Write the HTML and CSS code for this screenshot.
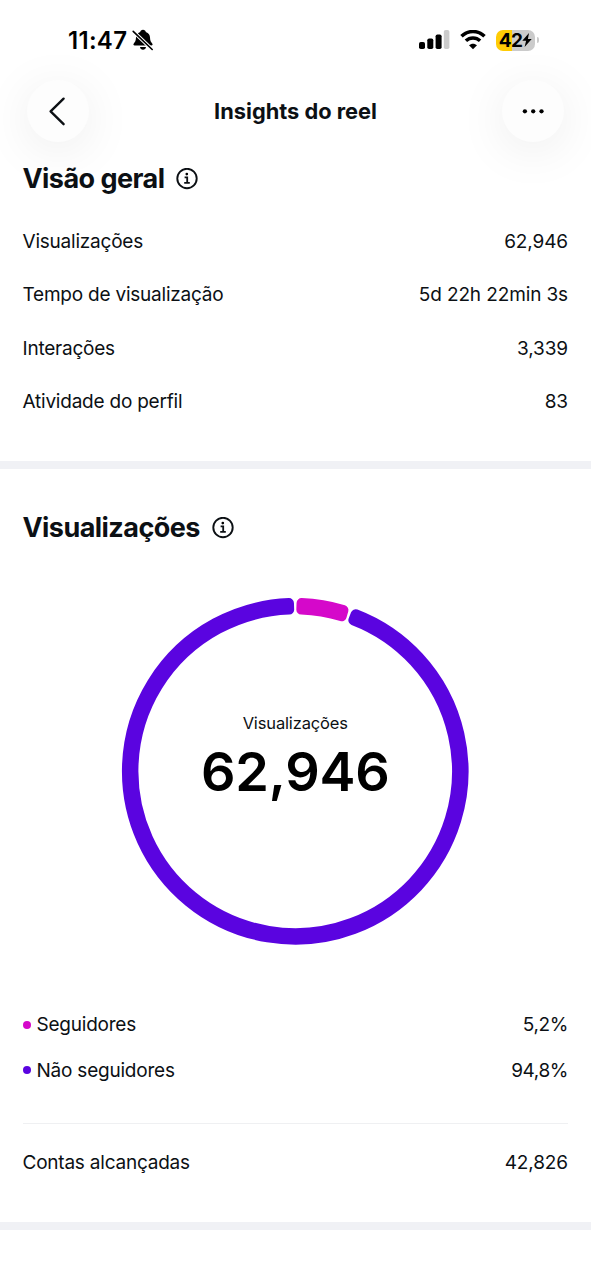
FILE: index.html
```html
<!DOCTYPE html>
<html lang="pt-BR">
<head>
<meta charset="utf-8">
<title>Insights do reel</title>
<link rel="stylesheet" href="styles.css">
</head>
<body>
<div class="status">
  <div class="status-left">
    <span class="clock">11:47</span>
    <svg class="bell" width="22" height="22" viewBox="0 0 22 22">
      <path d="M11 .8c-1.600 0-2.600 1-2.800 2.100C5.200 3.800 4.100 6 4 8.600c-.1 3.300-.9 4.500-2.200 5.900-.8.900-.4 2 .9 2h16.600c1.300 0 1.700-1.100.9-2-1.300-1.400-2.100-2.600-2.200-5.900-.1-2.600-1.200-4.800-4.200-5.700C13.600 1.800 12.600.8 11 .8zM8 18h6c-.2 1.700-1.400 2.700-3 2.700S8.200 19.700 8 18z"/>
      <path d="M1.200 2.300 20.200 20.500" stroke="#fff" stroke-width="3.600"/>
      <path d="M1.200 2.300 20.200 20.500" stroke="#000" stroke-width="1.600" stroke-linecap="round"/>
    </svg>
  </div>
  <div class="status-right">
    <svg width="31" height="20" viewBox="0 0 31 20">
      <rect x="0" y="12" width="6" height="7" rx="1.800"/>
      <rect x="8.300" y="8.500" width="6" height="10.500" rx="1.800"/>
      <rect x="16.600" y="4.500" width="6" height="14.500" rx="1.800"/>
      <rect x="24.800" y="0" width="5.600" height="19" rx="1.800" fill="#cbcbcb"/>
    </svg>
    <svg width="26" height="20" viewBox="0 0 26 20">
      <path d="M1.500 6.300C8-.1 18-.1 24.500 6.300" fill="none" stroke="#000" stroke-width="3.500"/>
      <path d="M5.900 10.800c4.100-3.900 10.100-3.900 14.200 0" fill="none" stroke="#000" stroke-width="3.500"/>
      <path d="M13 19.200 9 15.200c2.300-2.100 5.700-2.100 8 0z"/>
    </svg>
    <div class="battery-wrap">
      <div class="battery"><span>42</span>
        <svg width="10" height="14" viewBox="0 0 10 14"><path d="M7 0 .3 7.800h3.800L2.600 14 9.700 5.900H5.900z"/></svg>
      </div>
      <i class="battery-cap"></i>
    </div>
  </div>
</div>
<header class="nav">
  <div class="round"><svg width="62" height="62" viewBox="0 0 62 62"><path d="M36.600 18.700 23.600 31.300l13 12.900" fill="none" stroke="#0c1014" stroke-width="2.400" stroke-linecap="round" stroke-linejoin="round"/></svg></div>
  <h1 class="title">Insights do reel</h1>
  <div class="round"><svg width="62" height="62" viewBox="0 0 62 62"><circle cx="22.900" cy="31.300" r="2.150"/><circle cx="31.200" cy="31.300" r="2.150"/><circle cx="39.500" cy="31.300" r="2.150"/></svg></div>
</header>
<main>
  <section class="overview">
    <div class="heading"><h2 class="h-overview">Visão geral</h2>
      <svg class="info" width="22" height="22" viewBox="0 0 22 22"><circle cx="11" cy="10.500" r="9.700" fill="none" stroke="#0c1014" stroke-width="1.900"/><circle cx="10.800" cy="6.100" r="1.350"/><path d="M8.600 9.300h2.600v5.400M8.200 14.900h5.600" fill="none" stroke="#0c1014" stroke-width="1.800"/></svg>
    </div>
    <div class="row"><span>Visualizações</span><span class="num">62,946</span></div>
    <div class="row"><span>Tempo de visualização</span><span class="num">5d 22h 22min 3s</span></div>
    <div class="row"><span>Interações</span><span class="num">3,339</span></div>
    <div class="row"><span>Atividade do perfil</span><span class="num">83</span></div>
  </section>
  <section class="views">
    <div class="heading"><h2 class="h-views">Visualizações</h2>
      <svg class="info" width="22" height="22" viewBox="0 0 22 22"><circle cx="11" cy="10.500" r="9.700" fill="none" stroke="#0c1014" stroke-width="1.900"/><circle cx="10.800" cy="6.100" r="1.350"/><path d="M8.600 9.300h2.600v5.400M8.200 14.900h5.600" fill="none" stroke="#0c1014" stroke-width="1.800"/></svg>
    </div>
    <div class="chart">
      <svg class="ring" width="348" height="348" viewBox="-174.250 -174.300 348 348">
        <g stroke-width="10" stroke-linejoin="round">
          <path fill="#5a04e0" stroke="#5a04e0" d="M60.400-157.100A168.300 168.300 0 1 1-6.300-168.200L-6.070-161.700A161.800 161.800 0 1 0 58.100-151Z"/>
          <path fill="#d508ca" stroke="#d508ca" d="M6.300-168.200A168.300 168.300 0 0 1 48.200-161.200L46.400-155A161.800 161.800 0 0 0 6.070-161.700Z"/>
        </g>
      </svg>
      <div class="center"><span class="center-label">Visualizações</span><strong class="total">62,946</strong></div>
    </div>
    <div class="row legend"><span><i class="dot pink"></i>Seguidores</span><span class="num">5,2%</span></div>
    <div class="row legend"><span><i class="dot violet"></i>Não seguidores</span><span class="num">94,8%</span></div>
    <div class="row reach"><span>Contas alcançadas</span><span class="num">42,826</span></div>
  </section>
</main>
</body>
</html>
```
FILE: styles.css
```css
* { box-sizing: border-box; }
body { margin: 0; height: 1280px; overflow: hidden; background: #fff; color: #0c1014; font-family: Inter, "Liberation Sans", sans-serif; }
h1, h2 { margin: 0; }
svg { display: block; flex: none; }
.status { display: flex; justify-content: space-between; height: 80px; padding: 28px 52px 0 68px; color: #000; }
.status-left { display: flex; align-items: center; height: 24px; gap: 5px; }
.clock { font-size: 24px; font-weight: 600; letter-spacing: .3px; }
.status-right { display: flex; align-items: center; height: 24px; gap: 10px; }
.battery-wrap { display: flex; align-items: center; gap: 2px; }
.battery { display: flex; align-items: center; justify-content: center; width: 39px; height: 21px; border-radius: 7px; background: linear-gradient(90deg, #ffcc05 42%, #cbcbcb 42%); font-size: 19px; font-weight: 700; letter-spacing: -.6px; }
.battery-cap { width: 2px; height: 6px; border-radius: 0 2px 2px 0; background: #cbcbcb; }
.nav { display: flex; justify-content: space-between; align-items: center; height: 62px; padding: 0 27px; }
.round { width: 62px; height: 62px; border-radius: 50%; background: #fdfdfd; box-shadow: 0 8px 50px rgba(0, 0, 0, .08); }
.title { font-size: 21.8px; font-weight: 700; letter-spacing: 0; }
.overview { height: 327px; padding: 19px 23px 0 22.5px; border-bottom: 8px solid #f0f1f5; }
.heading { display: flex; align-items: center; gap: 12px; height: 36px; }
.heading h2 { font-size: 27px; font-weight: 700; line-height: 36px; letter-spacing: -.55px; white-space: nowrap; }
.row { display: flex; align-items: center; justify-content: space-between; height: 53.5px; font-size: 19px; letter-spacing: -.22px; }
.num { letter-spacing: -.12px; }
.overview .heading { margin-bottom: 17.5px; }
.views { height: 761px; padding: 41px 23px 0 22.5px; border-bottom: 8px solid #f0f1f5; }
.chart { display: grid; place-items: center; height: 348px; margin: 51px 0 57px; }
.ring, .center { grid-area: 1 / 1; }
.center { display: flex; flex-direction: column; align-items: center; padding-bottom: 22px; }
.center-label { font-size: 16.5px; line-height: 24px; letter-spacing: -.15px; }
.total { font-size: 54px; font-weight: 600; line-height: 74px; letter-spacing: -.2px; color: #000; }
.legend { height: 45.5px; }
.legend .num { letter-spacing: -.4px; }
.legend > span { display: flex; align-items: center; }
.dot { width: 8px; height: 8px; margin-right: 6px; border-radius: 50%; }
.pink { background: #d508ca; }
.violet { background: #5a04e0; }
.reach { height: 78px; margin-top: 30px; border-top: 1.500px solid #eff0f2; }
```
